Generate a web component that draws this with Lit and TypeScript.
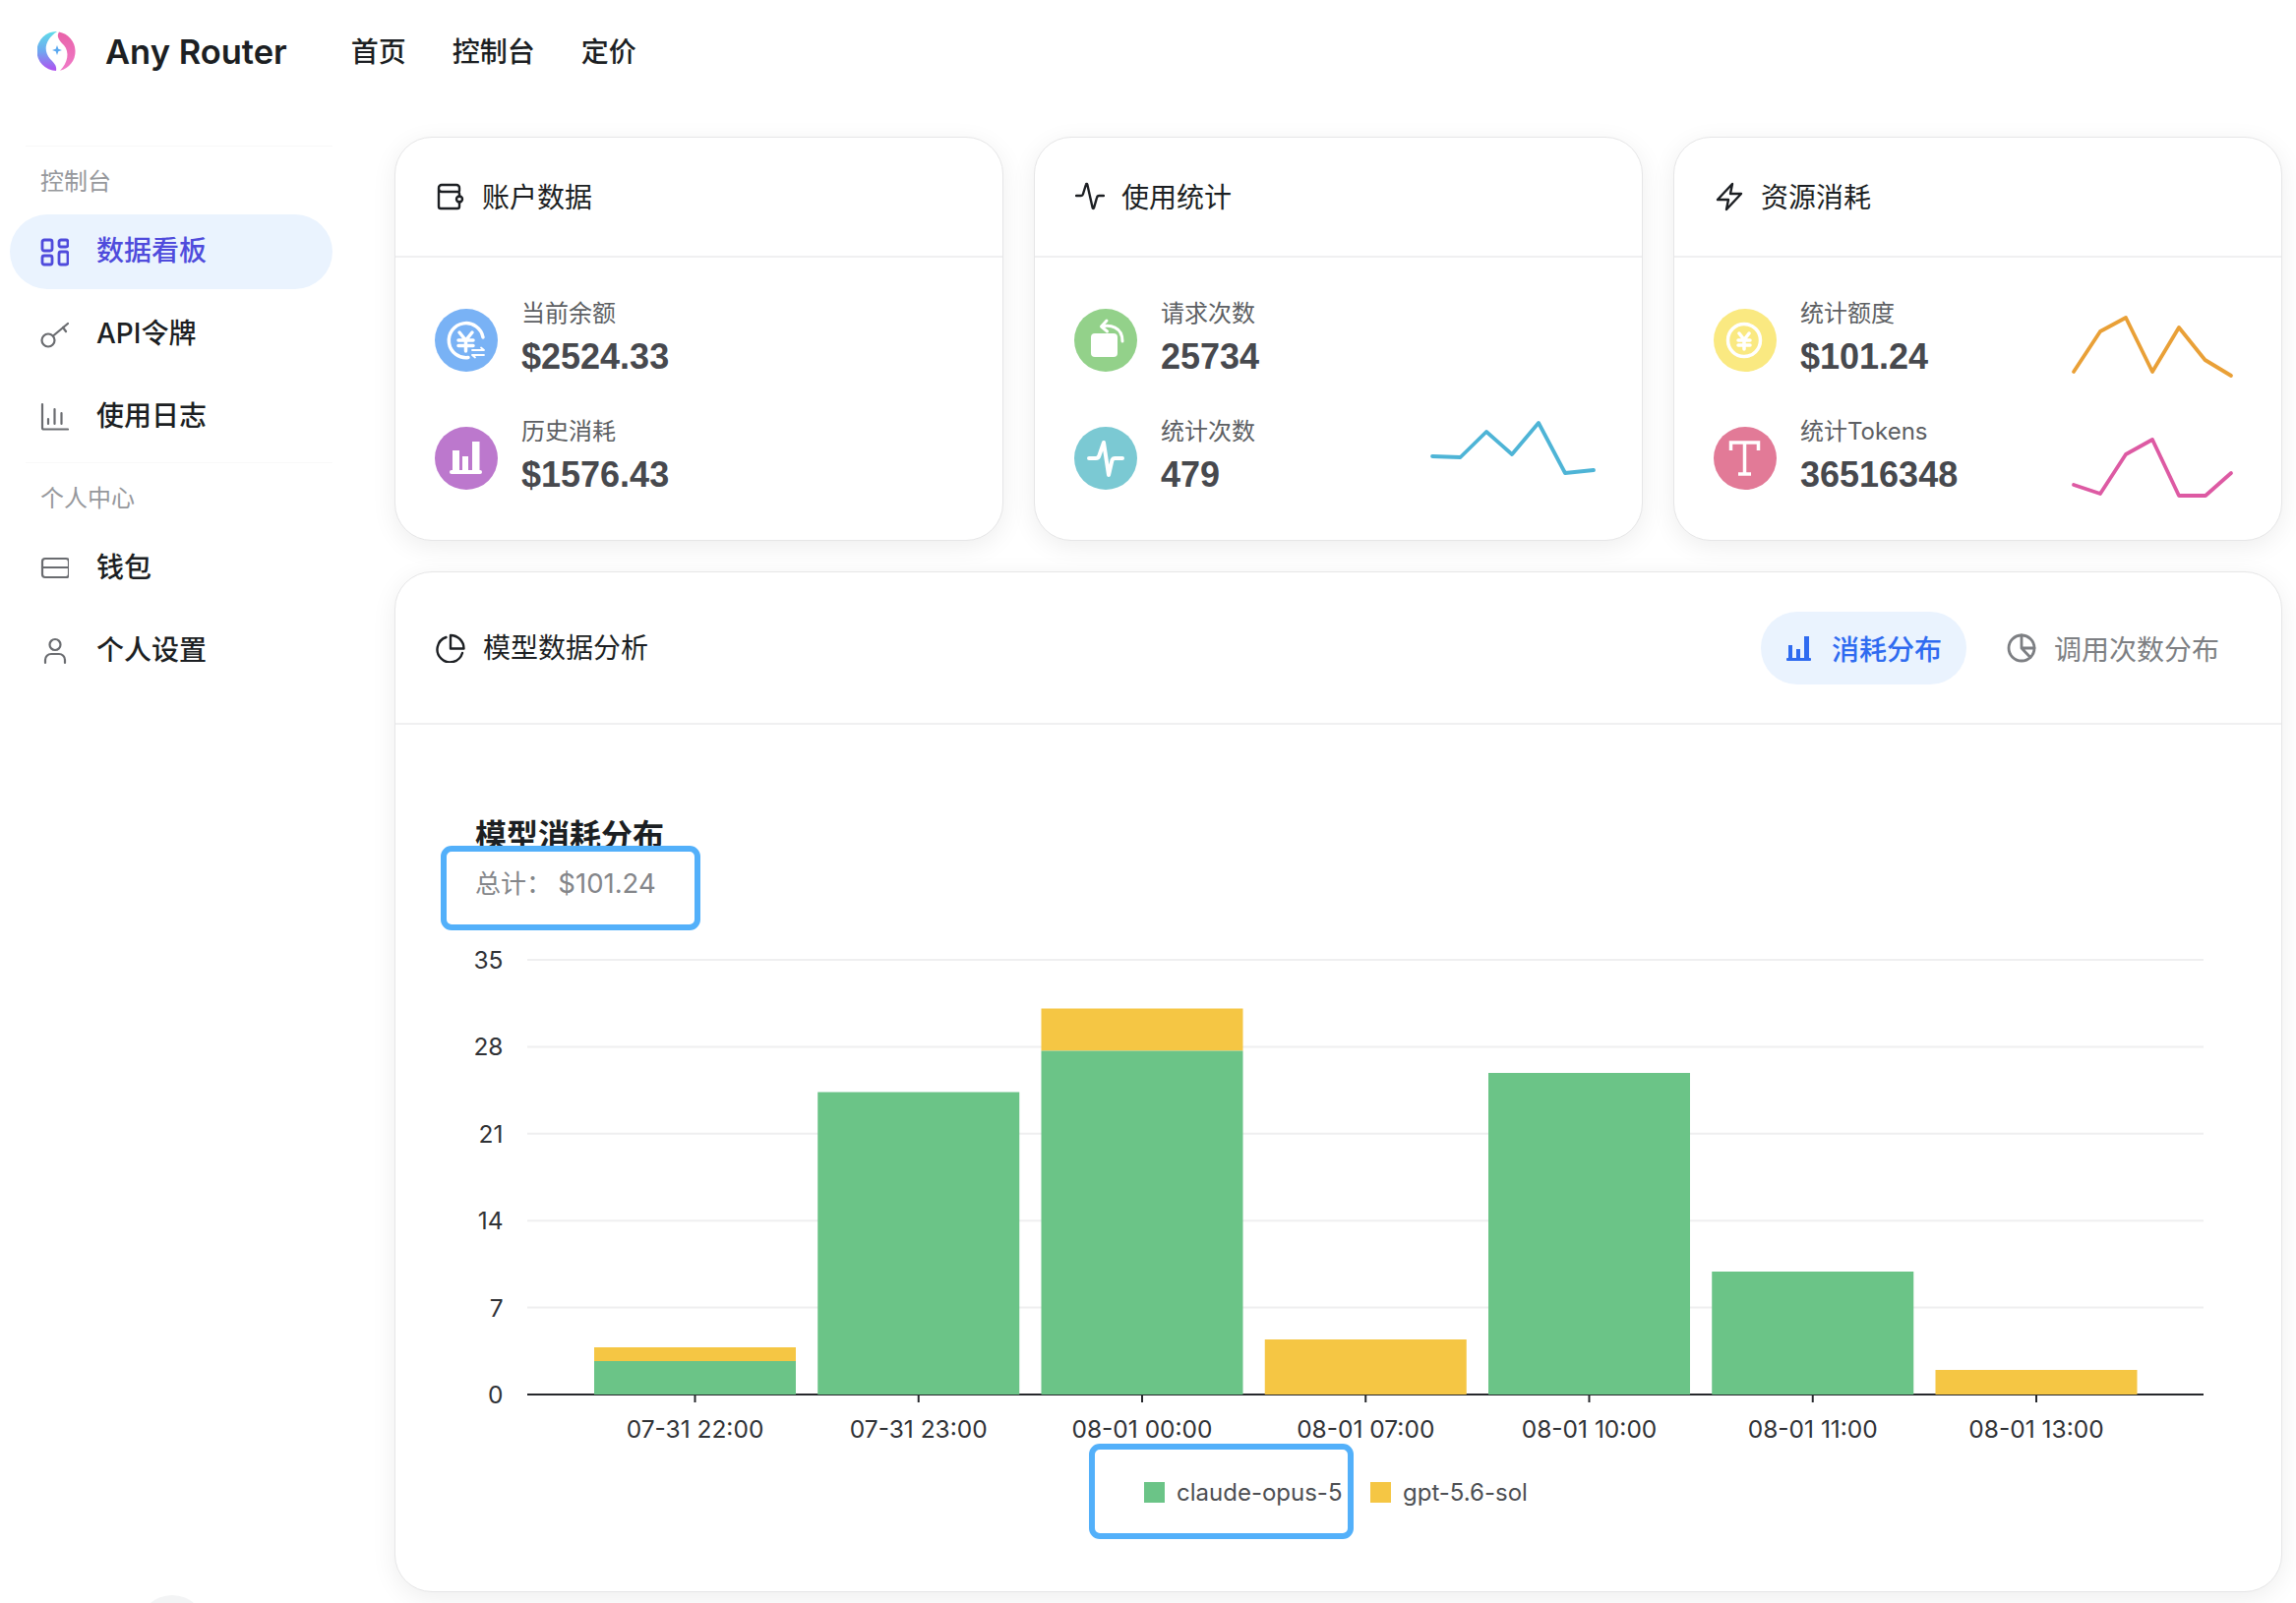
import { LitElement, html, css, svg } from 'lit';
import { customElement } from 'lit/decorators.js';

const GREEN = '#6bc487';
const YELLOW = '#f5c644';

// y of the gridlines, top (35) to bottom (0)
const gridY = [976, 1064.4, 1152.8, 1241.2, 1329.6, 1418];

const bars = [
  { label: '07-31 22:00', green: 1384, yellow: 1370 },
  { label: '07-31 23:00', green: 1110.5 },
  { label: '08-01 00:00', green: 1068.5, yellow: 1025.5 },
  { label: '08-01 07:00', yellow: 1362 },
  { label: '08-01 10:00', green: 1091 },
  { label: '08-01 11:00', green: 1293 },
  { label: '08-01 13:00', yellow: 1393 },
];

const icons = {
  grid: svg`<rect x="3" y="3" width="10" height="11" rx="2"/><rect x="20" y="3" width="9" height="7" rx="2"/><rect x="3" y="19" width="10" height="9" rx="2"/><rect x="20" y="15" width="9" height="13" rx="2"/>`,
  key: svg`<circle cx="9" cy="21" r="6.5"/><path d="M14 16.500 29 4M24 8l3 4"/>`,
  chart: svg`<path d="M3 2v24a1.500 1.500 0 0 0 1.500 1.500H29M9 17v5M15.500 7v15M22.500 11v11"/>`,
  card: svg`<rect x="3" y="5" width="27" height="19" rx="3"/><path d="M3 14h27"/>`,
  user: svg`<circle cx="16" cy="8.500" r="5.500"/><path d="M6 27v-3a6 6 0 0 1 6-6h8a6 6 0 0 1 6 6v3"/>`,
  wallet: svg`<path d="M24 9V6a3 3 0 0 0-3-3H6a3 3 0 0 0-3 3v19a2 2 0 0 0 2 2h17a2 2 0 0 0 2-2v-5M3 7a3 3 0 0 0 3 3h16a2 2 0 0 1 2 2v3"/><circle cx="24" cy="17.500" r="3"/>`,
  pulse: svg`<path d="M1 14h5a2 2 0 0 0 1.900-1.500L11 2.500c.2-.7 1.100-.7 1.300 0l5.400 24c.2.700 1.100.7 1.300 0L22 16a2.500 2.500 0 0 1 2.400-2H29"/>`,
  bolt: svg`<path d="M18 2 3 18h11l-2 10 15-16H16z"/>`,
  pie: svg`<path d="M10.500 4A13 13 0 1 0 27 20"/><path d="M15 2a13.500 13.500 0 0 1 13.500 13.500H15z"/>`,
  pieLine: svg`<circle cx="15" cy="15" r="13"/><path d="M15 2v13l9 9.500M15 15h13"/>`,
};

const lineIcon = (body: unknown) => html`<svg class="ico" viewBox="0 0 30 30">${body}</svg>`;

const statIcons = {
  balance: svg`
    <path d="M49 29A17.500 17.500 0 1 0 34 49.500" fill="none" stroke="#fff" stroke-width="3.500" stroke-linecap="round"/>
    <path d="M25 24l6.500 8 6.500-8M24 32h15M24 37.500h15M31.500 32v11" fill="none" stroke="#fff" stroke-width="3.500" stroke-linecap="round"/>
    <path d="M38 42h12M38 47h12M47 39.500l3 2.500M41 49.500 38 47" fill="none" stroke="#fff" stroke-width="1.800" stroke-linecap="round"/>`,
  history: svg`
    <rect x="18" y="24" width="7" height="21" fill="#fff"/><rect x="28" y="30" width="6" height="15" fill="#fff"/><rect x="38" y="15" width="7.500" height="30" fill="#fff"/>
    <rect x="15" y="44" width="33" height="4" rx="2" fill="#fff"/>`,
  request: svg`
    <rect x="17" y="25" width="27" height="24" rx="4" fill="#fff"/>
    <path d="M28 18c8-2 21 0 21 15M33 12l-5.500 6 6 5" fill="none" stroke="#fff" stroke-width="3" stroke-linecap="round" stroke-linejoin="round"/>`,
  count: svg`<path d="M15 32h7c2 0 3-1 3.500-3L30 16l5 33 3.500-15c.5-1.500 1.500-2 3-2H49" fill="none" stroke="#fff" stroke-width="4" stroke-linecap="round" stroke-linejoin="round"/>`,
  quota: svg`
    <circle cx="31" cy="32" r="16.500" fill="none" stroke="#fff" stroke-width="3.500"/>
    <path d="M26 25l5 6.500 5-6.500M25 32h12M25 37h12M31 31.500V41" fill="none" stroke="#fff" stroke-width="3.500" stroke-linecap="round"/>`,
  tokens: svg`
    <path d="M17.500 24v-8h28v8M31.500 16v32M25 48h13" fill="none" stroke="#fff" stroke-width="3.500"/>`,
};

const cards = [
  {
    icon: icons.wallet,
    title: '账户数据',
    rows: [
      { color: '#79b2f5', glyph: statIcons.balance, label: '当前余额', value: '$2524.33' },
      { color: '#bc78cd', glyph: statIcons.history, label: '历史消耗', value: '$1576.43' },
    ],
  },
  {
    icon: icons.pulse,
    title: '使用统计',
    rows: [
      { color: '#93d18a', glyph: statIcons.request, label: '请求次数', value: '25734' },
      {
        color: '#7bc9d3', glyph: statIcons.count, label: '统计次数', value: '479',
        spark: { color: '#4eb4d6', points: '-2,28 26.500,29 53,3 79,26 106,-6 133,45 162,42' },
      },
    ],
  },
  {
    icon: icons.bolt,
    title: '资源消耗',
    rows: [
      {
        color: '#fae981', glyph: statIcons.quota, label: '统计额度', value: '$101.24',
        spark: { color: '#e9a037', points: '0,62 27,21 53,7 80,62 107,17 133.500,50 160,66' },
      },
      {
        color: '#e27a97', glyph: statIcons.tokens, label: '统计Tokens', value: '36516348',
        spark: { color: '#dd5aa3', points: '0,57 27,66 53,26 80,11 107,68 134,68 160,45' },
      },
    ],
  },
];

@customElement('app-root')
export class AppRoot extends LitElement {
  static styles = css`
    :host {
      display: block;
      position: relative;
      width: 2334px;
      height: 1630px;
      overflow: hidden;
      background: #fff;
      color: #1c1f23;
      font-family: Inter, 'Noto Sans CJK SC', sans-serif;
    }

    .topbar {
      display: flex;
      align-items: center;
      height: 104px;
      padding-left: 38px;
      box-sizing: border-box;
    }
    .logo {
      width: 40px;
      height: 40px;
      margin-right: 29px;
    }
    .brand {
      font-size: 34.500px;
      font-weight: 600;
      margin-right: 65px;
    }
    .topnav {
      display: flex;
      gap: 47px;
      font-size: 28px;
      font-weight: 500;
      margin-bottom: 2px;
    }

    .layout {
      display: grid;
      grid-template-columns: 401px 1fr;
    }

    .side {
      padding: 44px 0 0 10px;
      width: 328px;
    }
    .rule {
      height: 1px;
      background: #f8f8f8;
      margin-left: 16px;
    }
    .group {
      font-size: 24px;
      color: #96989c;
      line-height: 34px;
      padding-left: 31px;
      margin: 19px 0 16px;
    }
    .item {
      display: flex;
      align-items: center;
      height: 76px;
      margin-bottom: 8px;
      padding-left: 30px;
      gap: 28px;
      font-size: 28px;
      font-weight: 500;
      border-radius: 38px;
    }
    .item span {
      margin-bottom: 6px;
    }
    .item .ico {
      width: 30px;
      height: 30px;
      stroke: #6a6c70;
      stroke-width: 2.200;
    }
    .item.on {
      background: #eaf3fe;
      color: #4f4bdc;
    }
    .item.on .ico {
      stroke: #4f4bdc;
      stroke-width: 2.800;
    }

    .ico {
      flex: none;
      fill: none;
      stroke: #1c1f23;
      stroke-width: 2.400;
      stroke-linecap: round;
      stroke-linejoin: round;
    }

    .main {
      padding: 35px 14px 0 0;
      display: flex;
      flex-direction: column;
      gap: 31px;
    }
    .cards {
      display: grid;
      grid-template-columns: repeat(3, 1fr);
      gap: 31px;
    }
    .card {
      background: #fff;
      border: 1px solid #e6e6e7;
      border-radius: 38px;
      box-shadow: 0 6px 26px rgba(0, 0, 0, 0.07);
    }
    .head {
      display: flex;
      align-items: center;
      gap: 17px;
      height: 120px;
      padding-left: 41px;
      border-bottom: 2px solid #f0f0f1;
      font-size: 28px;
    }
    .head .ico {
      width: 30px;
      height: 30px;
    }
    .head > span {
      margin-bottom: 3px;
    }
    .rows {
      padding: 36px 41px 0 40px;
      height: 251px;
      display: flex;
      flex-direction: column;
      gap: 24px;
    }
    .row {
      display: flex;
      align-items: center;
      height: 96px;
    }
    .dot {
      flex: none;
      width: 64px;
      height: 64px;
      margin-right: 24px;
    }
    .txt {
      flex: 1;
      align-self: flex-start;
      padding-top: 4px;
    }
    .label {
      font-size: 24px;
      line-height: 34px;
      color: #5d5f63;
    }
    .value {
      font-family: 'Liberation Sans', sans-serif;
      font-weight: 700;
      font-size: 36px;
      line-height: 48px;
      margin-top: 3px;
      color: #47494e;
    }
    .spark {
      flex: none;
      width: 170px;
      height: 60px;
      overflow: visible;
      fill: none;
      stroke-width: 3.800;
      stroke-linecap: round;
      stroke-linejoin: round;
    }

    .panel {
      position: relative;
      height: 1038px;
      box-sizing: border-box;
    }
    .panel .head {
      height: 153px;
      padding-right: 63px;
      gap: 18px;
    }
    .tabs {
      margin-left: auto;
      display: flex;
      align-items: center;
      gap: 41px;
    }
    .tab {
      display: flex;
      align-items: center;
      gap: 18px;
      height: 74px;
      border-radius: 37px;
      font-size: 28px;
      color: #7d7f83;
    }
    .tab.on {
      padding: 0 25px;
      gap: 20px;
      background: #eaf3fe;
      color: #2f6bf0;
      font-weight: 500;
    }
    .tab .ico {
      stroke: #7d7f83;
      stroke-width: 2.800;
    }
    .tab svg.bars-ico {
      width: 27px;
      height: 27px;
      fill: #2f6bf0;
      flex: none;
    }

    .chart-title {
      padding: 93px 0 0 81px;
      font-size: 32px;
      line-height: 40px;
      font-weight: 600;
    }
    .chart-total {
      padding: 10px 0 0 81px;
      font-size: 26px;
      line-height: 36px;
      color: #84868a;
    }
    .chart-total b {
      font-size: 27.500px;
      font-weight: 400;
      margin-left: -1px;
    }
    .plot {
      position: absolute;
      left: -1px;
      top: -1px;
      width: 1920px;
      height: 1038px;
      overflow: visible;
    }
    .plot .tick {
      font-size: 24.500px;
      fill: #303236;
    }
    .plot .legend {
      font-size: 24px;
      fill: #4d4f53;
    }

    /* blue annotation frames laid over the chart */
    .mark {
      position: absolute;
      box-sizing: border-box;
      border: 6px solid #53b0fa;
      border-radius: 11px;
    }
    .mark.total {
      left: 46px;
      top: 278px;
      width: 264px;
      height: 86px;
    }
    .mark.legend {
      left: 705px;
      top: 886px;
      width: 269px;
      height: 97px;
    }

    /* round floating button, mostly below the fold */
    .fab {
      position: absolute;
      left: 141px;
      top: 1622px;
      width: 68px;
      height: 68px;
      border-radius: 50%;
      background: #f3f4f5;
    }
  `;

  private renderCard(card: (typeof cards)[number]) {
    return html`
      <section class="card">
        <div class="head">${lineIcon(card.icon)}<span>${card.title}</span></div>
        <div class="rows">
          ${card.rows.map(
            (r: any) => html`
              <div class="row">
                <svg class="dot" viewBox="0 0 64 64">
                  <circle cx="32" cy="32" r="32" fill=${r.color}></circle>
                  ${r.glyph}
                </svg>
                <div class="txt">
                  <div class="label">${r.label}</div>
                  <div class="value">${r.value}</div>
                </div>
                ${r.spark
                  ? html`<svg class="spark" viewBox="0 0 170 60">
                      <polyline points=${r.spark.points} stroke=${r.spark.color}></polyline>
                    </svg>`
                  : null}
              </div>
            `,
          )}
        </div>
      </section>
    `;
  }

  private renderPlot() {
    // coordinates below are panel-local: page x - 401, page y - 581
    const ox = 401;
    const oy = 581;
    const base = gridY[5] - oy;
    const ticks = ['35', '28', '21', '14', '7', '0'];
    return svg`
      ${gridY.slice(0, 5).map(
        (y) => svg`<line x1=${536 - ox} x2=${2240 - ox} y1=${y - oy} y2=${y - oy} stroke="#efeff0" stroke-width="2"></line>`,
      )}
      <line x1=${536 - ox} x2=${2240 - ox} y1=${base} y2=${base} stroke="#26282c" stroke-width="2"></line>
      ${gridY.map(
        (y, i) => svg`<text class="tick" x=${511.5 - ox} y=${y - oy + 9} text-anchor="end">${ticks[i]}</text>`,
      )}
      ${bars.map((b, i) => {
        const cx = 706.5 + i * 227.25 - ox;
        const x = cx - 102.5;
        const parts = [];
        if (b.yellow !== undefined) {
          const end = b.green ?? gridY[5];
          parts.push(svg`<rect x=${x} width="205" y=${b.yellow - oy} height=${end - b.yellow} fill=${YELLOW}></rect>`);
        }
        if (b.green !== undefined) {
          parts.push(svg`<rect x=${x} width="205" y=${b.green - oy} height=${gridY[5] - b.green} fill=${GREEN}></rect>`);
        }
        return svg`
          ${parts}
          <line x1=${cx} x2=${cx} y1=${base} y2=${base + 8} stroke="#26282c" stroke-width="2"></line>
          <text class="tick" x=${cx} y=${base + 44} text-anchor="middle">${b.label}</text>
        `;
      })}
      <rect x=${1163 - ox} y=${1507 - oy} width="21" height="21" fill=${GREEN}></rect>
      <text class="legend" x=${1196 - ox} y=${1526 - oy}>claude-opus-5</text>
      <rect x=${1393 - ox} y=${1507 - oy} width="21" height="21" fill=${YELLOW}></rect>
      <text class="legend" x=${1426 - ox} y=${1526 - oy}>gpt-5.6-sol</text>
    `;
  }

  render() {
    return html`
      <header class="topbar">
        <svg class="logo" viewBox="0 0 40 40">
          <defs>
            <linearGradient id="lg-left" x1="0.5" y1="0" x2="0.5" y2="1">
              <stop offset="0" stop-color="#5fdce8"></stop>
              <stop offset="0.5" stop-color="#6fa8f0"></stop>
              <stop offset="1" stop-color="#b04ff0"></stop>
            </linearGradient>
            <linearGradient id="lg-right" x1="0.5" y1="0" x2="0.5" y2="1">
              <stop offset="0" stop-color="#e862a8"></stop>
              <stop offset="1" stop-color="#f07ac8"></stop>
            </linearGradient>
          </defs>
          <path d="M20 0A20 20 0 0 0 19 40C20 35 17 32 13 28 6 20 7 9 20 0z" fill="url(#lg-left)"></path>
          <path d="M22 .5A20 20 0 0 1 23 39.700C31 32 33 21 27 14 22 9 19 5 22 .5z" fill="url(#lg-right)"></path>
          <path d="M20 14l1.300 3.700L25 19l-3.700 1.300L20 24l-1.300-3.700L15 19l3.700-1.300z" fill="#5aa8f0"></path>
        </svg>
        <div class="brand">Any Router</div>
        <nav class="topnav"><span>首页</span><span>控制台</span><span>定价</span></nav>
      </header>
      <div class="layout">
        <aside class="side">
          <div class="rule"></div>
          <div class="group">控制台</div>
          <div class="item on">${lineIcon(icons.grid)}<span>数据看板</span></div>
          <div class="item">${lineIcon(icons.key)}<span>API令牌</span></div>
          <div class="item">${lineIcon(icons.chart)}<span>使用日志</span></div>
          <div class="rule"></div>
          <div class="group">个人中心</div>
          <div class="item">${lineIcon(icons.card)}<span>钱包</span></div>
          <div class="item">${lineIcon(icons.user)}<span>个人设置</span></div>
        </aside>
        <main class="main">
          <div class="cards">${cards.map((c) => this.renderCard(c))}</div>
          <section class="card panel">
            <div class="head">
              ${lineIcon(icons.pie)}<span>模型数据分析</span>
              <div class="tabs">
                <div class="tab on">
                  <svg class="bars-ico" viewBox="0 0 27 27">
                    <rect x="3" y="11" width="4" height="14"></rect>
                    <rect x="11" y="15" width="4" height="10"></rect>
                    <rect x="19" y="2" width="5" height="23"></rect>
                    <rect x="1" y="24" width="25" height="3" rx="1"></rect>
                  </svg>
                  <span>消耗分布</span>
                </div>
                <div class="tab">${lineIcon(icons.pieLine)}<span>调用次数分布</span></div>
              </div>
            </div>
            <svg class="plot" viewBox="0 0 1920 1038">${this.renderPlot()}</svg>
            <div class="chart-title">模型消耗分布</div>
            <div class="chart-total">总计： <b>$101.24</b></div>
            <div class="mark total"></div>
            <div class="mark legend"></div>
          </section>
        </main>
      </div>
      <div class="fab"></div>
    `;
  }
}
